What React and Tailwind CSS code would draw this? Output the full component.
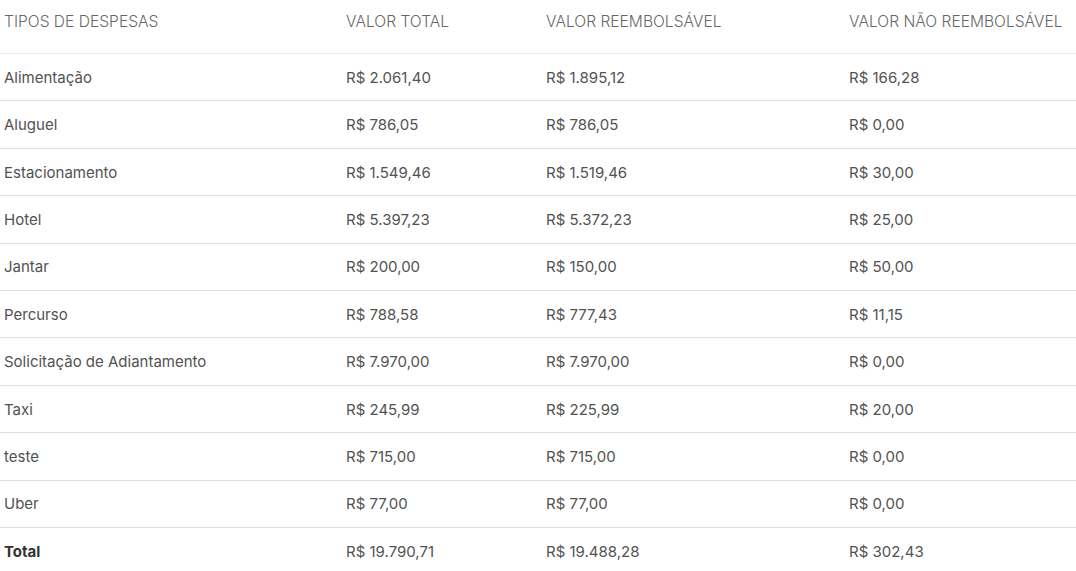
import React from "react";

const rows = [
  ["Alimentação", "R$ 2.061,40", "R$ 1.895,12", "R$ 166,28"],
  ["Aluguel", "R$ 786,05", "R$ 786,05", "R$ 0,00"],
  ["Estacionamento", "R$ 1.549,46", "R$ 1.519,46", "R$ 30,00"],
  ["Hotel", "R$ 5.397,23", "R$ 5.372,23", "R$ 25,00"],
  ["Jantar", "R$ 200,00", "R$ 150,00", "R$ 50,00"],
  ["Percurso", "R$ 788,58", "R$ 777,43", "R$ 11,15"],
  ["Solicitação de Adiantamento", "R$ 7.970,00", "R$ 7.970,00", "R$ 0,00"],
  ["Taxi", "R$ 245,99", "R$ 225,99", "R$ 20,00"],
  ["teste", "R$ 715,00", "R$ 715,00", "R$ 0,00"],
  ["Uber", "R$ 77,00", "R$ 77,00", "R$ 0,00"],
];

export default function App() {
  return (
    <div className="w-[1076px] bg-white" style={{ fontFamily: "Inter, 'Noto Sans', sans-serif" }}>
      <table className="w-full border-collapse text-[15px] leading-[22.5px]">
        <colgroup>
          <col className="w-[342px]" />
          <col className="w-[200px]" />
          <col className="w-[303px]" />
          <col className="w-[231px]" />
        </colgroup>
        <thead>
          <tr className="border-b border-[#ececec] text-left text-[#686868] text-[15.6px] leading-[24px]">
            <th className="px-1 pt-[10px] pb-[19px] font-light">TIPOS DE DESPESAS</th>
            <th className="px-1 pt-[10px] pb-[19px] font-light">VALOR TOTAL</th>
            <th className="px-1 pt-[10px] pb-[19px] font-light">VALOR REEMBOLSÁVEL</th>
            <th className="px-1 pt-[10px] pb-[19px] font-light">VALOR NÃO REEMBOLSÁVEL</th>
          </tr>
        </thead>
        <tbody className="text-[#525252]">
          {rows.map((r) => (
            <tr key={r[0]} className="border-b border-[#dedede]">
              {r.map((c, i) => (
                <td key={i} className="px-1 pt-[12.9px] pb-[11px]">{c}</td>
              ))}
            </tr>
          ))}
          <tr>
            <td className="px-1 pt-[12.9px] pb-[11px] font-bold text-[#333]">Total</td>
            <td className="px-1 pt-[12.9px] pb-[11px]">R$ 19.790,71</td>
            <td className="px-1 pt-[12.9px] pb-[11px]">R$ 19.488,28</td>
            <td className="px-1 pt-[12.9px] pb-[11px]">R$ 302,43</td>
          </tr>
        </tbody>
      </table>
    </div>
  );
}
